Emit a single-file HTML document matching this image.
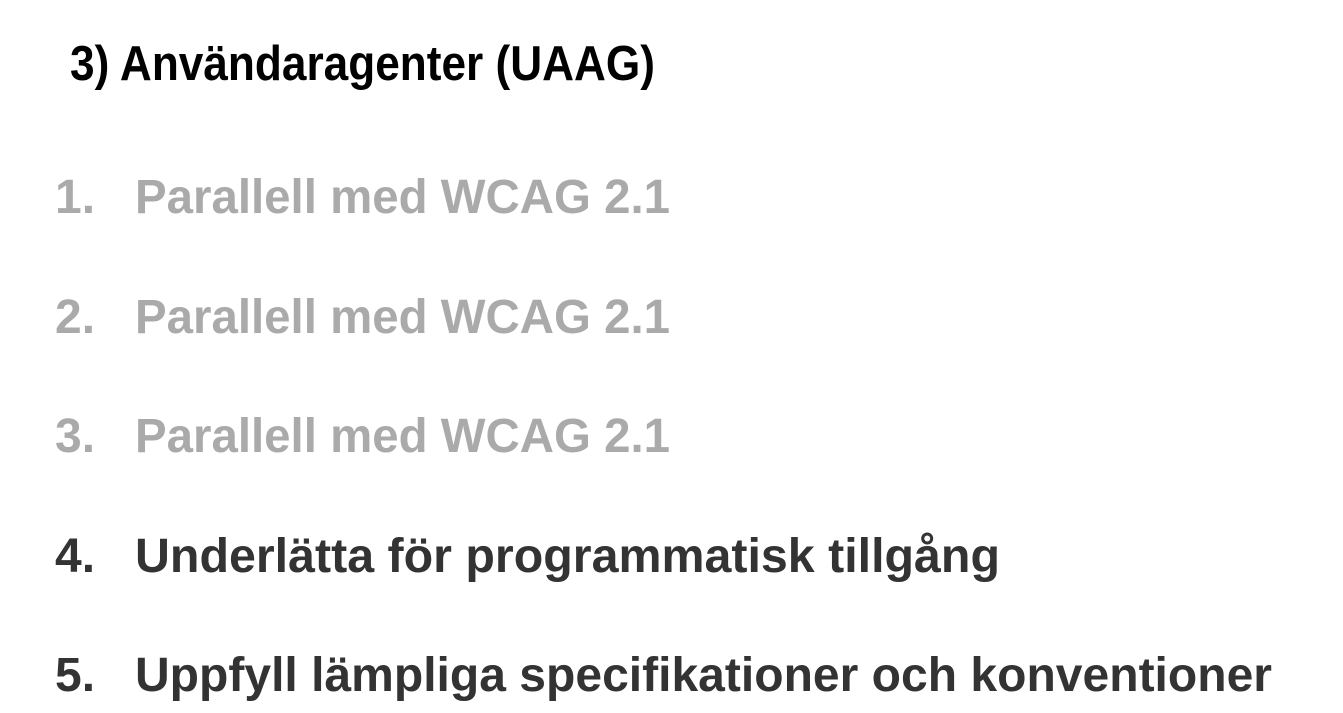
<!DOCTYPE html>
<html><head><meta charset="utf-8"><style>
html,body{margin:0;padding:0;background:#fff;width:1343px;height:713px;overflow:hidden}
svg{display:block}
text{font-family:"Liberation Sans",Arial,sans-serif;font-weight:bold}
</style></head><body>
<svg width="1343" height="713" viewBox="0 0 1343 713">
<text x="70" y="80" font-size="49" fill="#000" textLength="585" lengthAdjust="spacingAndGlyphs">3) Användaragenter (UAAG)</text>
<g font-size="48">
<text x="55" y="213" fill="#aaaaaa">1.</text>
<text x="135" y="213" fill="#aaaaaa" textLength="535" lengthAdjust="spacingAndGlyphs">Parallell med WCAG 2.1</text>
<text x="55" y="333" fill="#aaaaaa">2.</text>
<text x="135" y="333" fill="#aaaaaa" textLength="535" lengthAdjust="spacingAndGlyphs">Parallell med WCAG 2.1</text>
<text x="55" y="452" fill="#aaaaaa">3.</text>
<text x="135" y="452" fill="#aaaaaa" textLength="535" lengthAdjust="spacingAndGlyphs">Parallell med WCAG 2.1</text>
<text x="55" y="572" fill="#333333">4.</text>
<text x="135" y="572" fill="#333333" textLength="865" lengthAdjust="spacingAndGlyphs">Underlätta för programmatisk tillgång</text>
<text x="55" y="691" fill="#333333">5.</text>
<text x="135" y="691" fill="#333333" textLength="1137" lengthAdjust="spacingAndGlyphs">Uppfyll lämpliga specifikationer och konventioner</text>
</g>
</svg>
</body></html>
